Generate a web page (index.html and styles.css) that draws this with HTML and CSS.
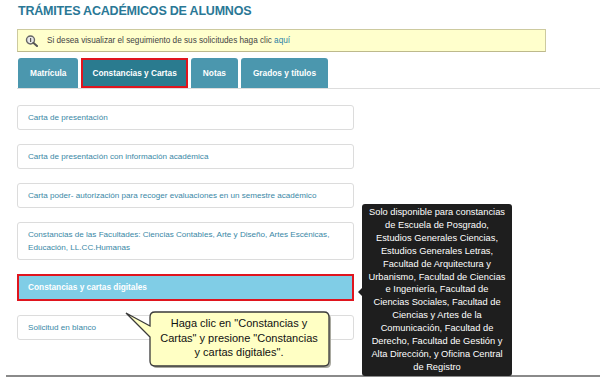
FILE: index.html
```html
<!DOCTYPE html>
<html lang="es">
<head>
	<meta charset="utf-8" />
	<title>Trámites académicos de alumnos</title>
	<link rel="stylesheet" href="styles.css">
</head>
<body>
	<div class="page">
		<h1 class="title">TRÁMITES ACADÉMICOS DE ALUMNOS</h1>
		<div class="notice">
			<svg class="notice-icon" width="14" height="12" viewBox="0 0 14 12">
				<circle cx="5.5" cy="5" r="4" fill="#e8e8e8" stroke="#666" stroke-width="1.4"/>
				<rect x="5" y="3" width="1.2" height="4" fill="#555"/>
				<path d="M8.3 7.8 L12 11" stroke="#555" stroke-width="2" stroke-linecap="round"/>
			</svg>
			<span>Si desea visualizar el seguimiento de sus solicitudes haga clic <a href="#">aquí</a></span>
		</div>
		<div class="tabs">
			<div class="tab">Matrícula</div>
			<div class="tab active">Constancias y Cartas</div>
			<div class="tab">Notas</div>
			<div class="tab">Grados y títulos</div>
		</div>
		<ul class="items">
			<li class="item">Carta de presentación</li>
			<li class="item">Carta de presentación con información académica</li>
			<li class="item">Carta poder- autorización para recoger evaluaciones en un semestre académico</li>
			<li class="item">Constancias de las Facultades: Ciencias Contables, Arte y Diseño, Artes Escénicas, Educación, LL.CC.Humanas</li>
			<li class="item selected">Constancias y cartas digitales</li>
			<li class="item">Solicitud en blanco</li>
		</ul>
	</div>
	<div class="footer-line"></div>

	<!-- overlays -->
	<div class="tooltip">Solo disponible para constancias de Escuela de Posgrado, Estudios Generales Ciencias, Estudios Generales Letras, Facultad de Arquitectura y Urbanismo, Facultad de Ciencias e Ingeniería, Facultad de Ciencias Sociales, Facultad de Ciencias y Artes de la Comunicación, Facultad de Derecho, Facultad de Gestión y Alta Dirección, y Oficina Central de Registro</div>
	<svg class="callout-shape" width="220" height="70" viewBox="0 0 220 70">
		<path d="M34 7 H203 Q208 7 208 12 V56 Q208 61 203 61 H34 Q29 61 29 56 V32 L5 8 L29 21 V12 Q29 7 34 7 Z" fill="#a9a9a0" transform="translate(2 2)"/>
		<path d="M34 7 H203 Q208 7 208 12 V56 Q208 61 203 61 H34 Q29 61 29 56 V32 L5 8 L29 21 V12 Q29 7 34 7 Z" fill="#ffffc4" stroke="#3a3a3a" stroke-width="1.3"/>
	</svg>
	<div class="callout-text">Haga clic en "Constancias y Cartas" y presione "Constancias y cartas digitales".</div>
</body>
</html>
```

FILE: styles.css
```css
body {
	margin: 0;
	font-family: "Liberation Sans", Arial, sans-serif;
	background: #fff;
	width: 600px;
	height: 379px;
	overflow: hidden;
	position: relative;
}
.page {
	padding: 3px 0 0 17px;
	height: 372px;
}
.title {
	margin: 0 0 0 1px;
	font-size: 12.5px;
	line-height: 17px;
	color: #2a7896;
	letter-spacing: -0.2px;
}
.notice {
	box-sizing: border-box;
	width: 529px;
	height: 23px;
	margin-top: 9px;
	display: flex;
	align-items: center;
	gap: 8px;
	padding-left: 7px;
	background: #ffffcc;
	border: 1px solid #cdca9f;
	border-bottom-color: #bdb98c;
	font-size: 8.2px;
	color: #444;
}
.notice a {
	color: #2c7fa6;
	text-decoration: none;
}
.tabs {
	display: flex;
	gap: 3px;
	margin-top: 6px;
	padding-left: 1px;
	border-bottom: 1px solid #ddd;
}
.tab {
	box-sizing: border-box;
	height: 30px;
	display: flex;
	align-items: center;
	padding: 0 12px;
	background: #4b97ae;
	color: #fff;
	font-weight: bold;
	font-size: 8.3px;
	border-radius: 3px 3px 0 0;
}
.tab.active {
	background: #2a7b8f;
	border: 2px solid #e0151e;
	border-radius: 0;
	padding: 0 9px;
}
.items {
	list-style: none;
	margin: 16px 0 0;
	padding: 0;
	width: 337px;
	display: flex;
	flex-direction: column;
	gap: 14px;
}
.item {
	border: 1px solid #dcdcdc;
	border-radius: 3px;
	padding: 5px 10px;
	font-size: 8.1px;
	line-height: 13px;
	color: #3a88a6;
}
.item.selected {
	background: #80cde6;
	border: 2px solid #e0151e;
	border-radius: 0;
	padding: 5px 9px;
	color: #fff;
	font-weight: bold;
	font-size: 8.3px;
}
.footer-line {
	margin-left: 6px;
	height: 2px;
	background: #8a8a8a;
}

/* overlays */
.tooltip {
	position: absolute;
	left: 362px;
	top: 204px;
	width: 150px;
	height: 172px;
	box-sizing: border-box;
	padding: 2px 5.5px;
	background: #1e1e1e;
	border-radius: 3px;
	color: #fff;
	font-size: 9.3px;
	line-height: 12.9px;
	text-align: center;
}
.tooltip::before {
	content: "";
	position: absolute;
	left: -4px;
	top: 84px;
	border: 4px solid transparent;
	border-left: 0;
	border-right-color: #1e1e1e;
}
.callout-shape {
	position: absolute;
	left: 121px;
	top: 305px;
}
.callout-text {
	position: absolute;
	left: 158px;
	top: 316px;
	width: 162px;
	font-size: 11px;
	line-height: 14.5px;
	color: #111;
	text-align: center;
}
```
